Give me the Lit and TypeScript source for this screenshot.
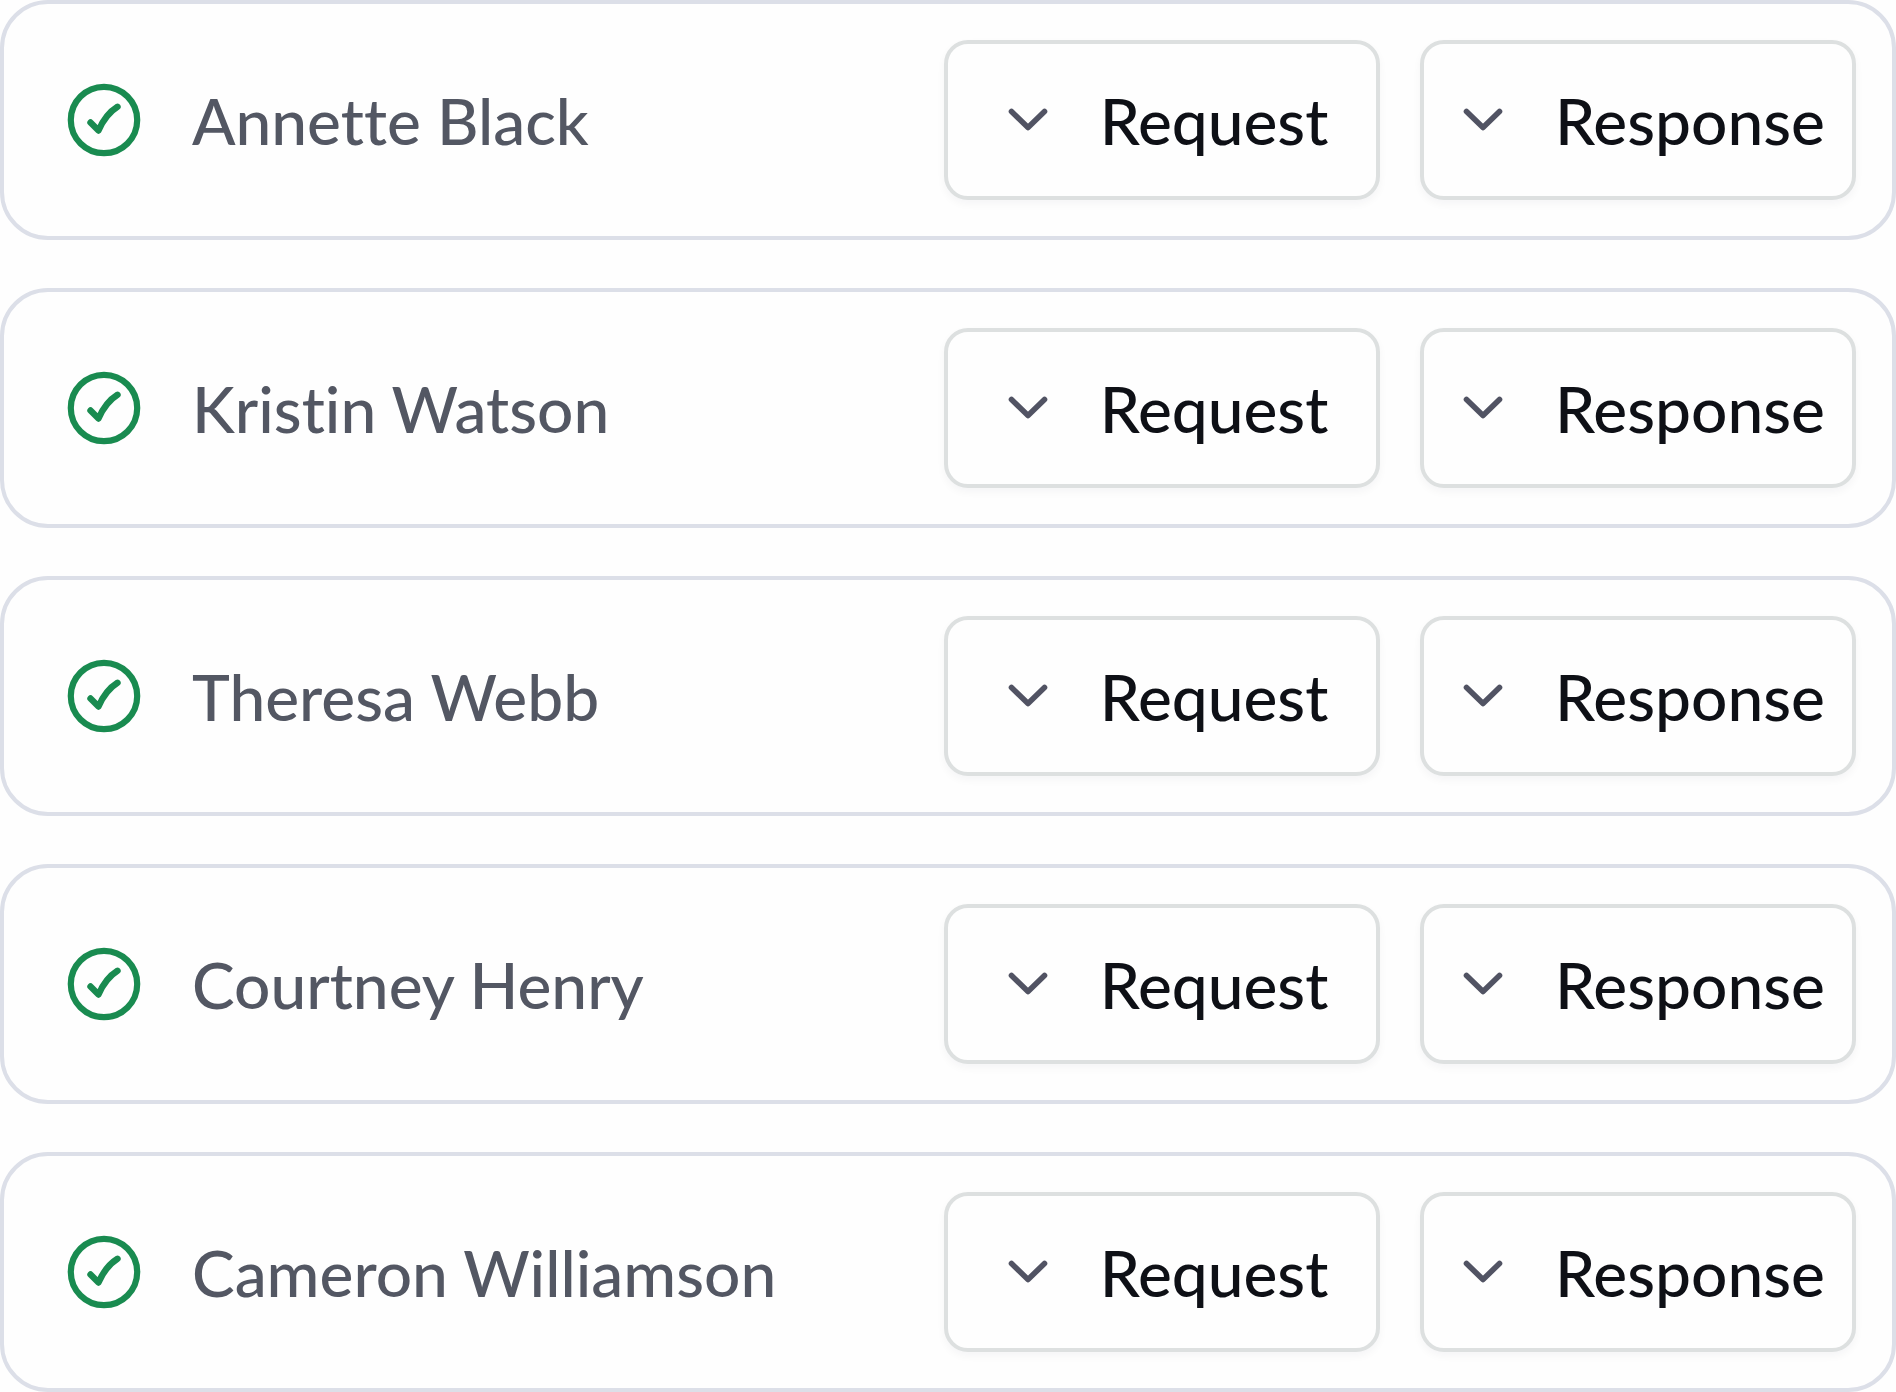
import { LitElement, css, html, svg } from "lit";
import { customElement, property } from "lit/decorators.js";

const people = [
  "Annette Black",
  "Kristin Watson",
  "Theresa Webb",
  "Courtney Henry",
  "Cameron Williamson",
];

const checkIcon = svg`
  <circle cx="36" cy="36" r="33.2" stroke-width="6.2" />
  <path d="M22.5 38.5 L30.5 46.5 C34 38.5 39.5 29 49.5 22.8" stroke-width="6.4" />
`;

const chevronIcon = svg`<path d="M15.5 23.5 L32 39.5 L48.5 23.5" stroke-width="5.6" />`;

@customElement("person-row")
export class PersonRow extends LitElement {
  @property() name = "";

  static styles = css`
    :host {
      display: flex;
      align-items: center;
      gap: 52px;
      box-sizing: border-box;
      padding: 36px 36px 36px 64px;
      border: 4px solid #dcdfe8;
      border-radius: 48px;
      background: #fefefe;
      font-size: 64px;
      line-height: 80px;
      font-weight: 500;
      font-variant-ligatures: none;
    }
    svg {
      display: block;
      flex: none;
      overflow: visible;
      fill: none;
      stroke: currentColor;
      stroke-linecap: round;
      stroke-linejoin: round;
    }
    .check {
      width: 72px;
      height: 72px;
      color: #198b50;
    }
    .name {
      flex: 1;
      min-width: 0;
      padding-top: 2px;
      color: #535763;
    }
    .actions {
      display: flex;
      gap: 40px;
    }
    .action {
      display: flex;
      align-items: center;
      justify-content: center;
      gap: 40px;
      box-sizing: border-box;
      width: 436px;
      height: 160px;
      margin: 0;
      padding: 0;
      border: 4px solid #dde0e0;
      border-radius: 24px;
      background: #fefefe;
      box-shadow: 0 4px 8px rgba(16, 24, 40, 0.04);
      color: #0e1016;
      font: inherit;
      font-variant-ligatures: inherit;
      cursor: pointer;
    }
    .label {
      padding-top: 2px;
    }
    .chevron {
      width: 64px;
      height: 64px;
      color: #515363;
    }
  `;

  private action(label: string) {
    return html`
      <button class="action" type="button">
        <svg class="chevron" viewBox="0 0 64 64" aria-hidden="true">${chevronIcon}</svg>
        <span class="label">${label}</span>
      </button>
    `;
  }

  render() {
    return html`
      <svg class="check" viewBox="0 0 72 72" aria-hidden="true">${checkIcon}</svg>
      <span class="name">${this.name}</span>
      <div class="actions">${this.action("Request")}${this.action("Response")}</div>
    `;
  }
}

@customElement("app-root")
export class AppRoot extends LitElement {
  static styles = css`
    :host {
      display: block;
      background: #fefefe;
      font-family: Lato, "Liberation Sans", sans-serif;
    }
    .list {
      display: flex;
      flex-direction: column;
      gap: 48px;
    }
  `;

  render() {
    return html`
      <main class="list">
        ${people.map((name) => html`<person-row .name=${name}></person-row>`)}
      </main>
    `;
  }
}
